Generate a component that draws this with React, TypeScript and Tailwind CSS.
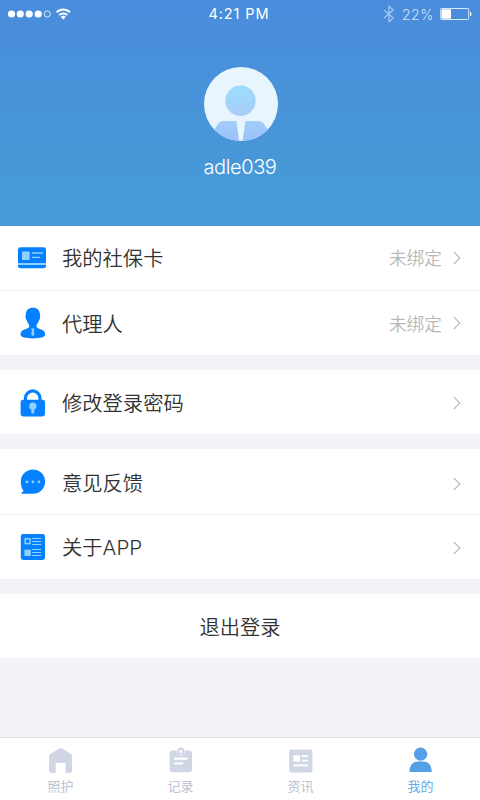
import React from 'react'

const CardIcon = () => (
  <svg className="mt-0.5 mr-px" width="28" height="22" viewBox="0 0 28 22">
    <rect width="28" height="21" y="0.3" rx="2.4" fill="#0580ff" />
    <rect y="16" width="28" height="2" fill="#8fd0ff" />
    <rect x="4" y="4.6" width="7.6" height="8.4" rx="0.6" fill="#8fd0ff" />
    <path d="M14 6h11M14 10.4h8" stroke="#8fd0ff" strokeWidth="1.3" />
  </svg>
)

const AgentIcon = () => (
  <svg width="26" height="32" viewBox="0 0 26 32">
    <path
      d="M12.900.7c4.300 0 7 2.600 7 6.800 0 1.100.4 1.300.3 2.700-.1 1.600-.7 2-1.200 3.300-.6 1.700-1.300 3.100-2.400 4.300v1.700c.2 1.500 2 2 4.500 2.900 2.900 1 4.100 2.500 4.100 5.400 0 2.300-5.400 3.600-12.400 3.600S.5 30.100.5 27.800c0-2.900 1.200-4.400 4.100-5.400 2.500-.9 4.300-1.400 4.500-2.900v-1.700c-1.100-1.200-1.800-2.600-2.400-4.300-.5-1.300-1.100-1.700-1.200-3.300-.1-1.400.3-1.600.3-2.700C5.800 3.300 8.600.7 12.900.7Z"
      fill="#0580ff"
    />
    <path d="M11.200 21.600h3.400l-.7 1.800.7 4.200-1.700 1.600-1.700-1.600.7-4.200Z" fill="#8fd0ff" />
  </svg>
)

const LockIcon = () => (
  <svg className="mt-px" width="26" height="28" viewBox="0 0 26 28">
    <path d="M5.400 12V9.200a7.300 7.300 0 0 1 14.600 0V12" fill="none" stroke="#0580ff" strokeWidth="3.2" />
    <rect x="0.6" y="10.800" width="24.400" height="16.600" rx="2.400" fill="#0580ff" />
    <circle cx="12.800" cy="17.200" r="3.600" fill="#8fd0ff" />
    <rect x="11.300" y="18" width="3" height="6.500" rx="1.200" fill="#8fd0ff" />
  </svg>
)

const ChatIcon = () => (
  <svg width="26" height="26" viewBox="0 0 26 26">
    <path
      d="M13 .6c6.800 0 12.100 5.300 12.100 12.100S19.800 24.800 13 24.800H2c-.7 0-.9-.6-.4-1l2-1.700C1.800 19.900.8 16.500.8 12.700.8 5.900 6.200.6 13 .6Z"
      fill="#0580ff"
    />
    <circle cx="6.900" cy="12.900" r="1.400" fill="#8fd0ff" />
    <circle cx="12.900" cy="12.900" r="1.400" fill="#8fd0ff" />
    <circle cx="18.900" cy="12.900" r="1.400" fill="#8fd0ff" />
  </svg>
)

const AboutIcon = () => (
  <svg width="26" height="28" viewBox="0 0 26 28">
    <rect x="0.8" y="1" width="24.200" height="26" rx="2.400" fill="#0580ff" />
    <rect x="5.200" y="5.800" width="4.800" height="4.800" fill="none" stroke="#8fd0ff" strokeWidth="1.500" />
    <rect x="4.400" y="16.600" width="6.400" height="6.400" fill="#8fd0ff" />
    <path d="M12.200 5.500h9M12.200 8.500h9M12.200 11.500h9M12.200 16.500h9M12.200 19.500h9M12.200 22.500h9" stroke="#8fd0ff" strokeWidth="1" />
  </svg>
)

const Arrow = () => (
  <svg width="8" height="14" viewBox="0 0 8 14" fill="none" stroke="#b4b4b4" strokeWidth="1.1">
    <path d="m.8.8 6 6.200-6 6.200" />
  </svg>
)

type RowProps = {
  icon: React.ReactNode
  label: React.ReactNode
  value?: string
  className?: string
  low?: boolean
}

const Row = ({ icon, label, value, className = 'h-16', low }: RowProps) => (
  <div className={`flex items-center bg-white pr-[19px] ${className}`}>
    <div className="ml-[18px] flex w-[29px] justify-center">{icon}</div>
    <span className="ml-[15px] flex-1 text-[20.3px] leading-7">{label}</span>
    {value && <span className="mr-[11px] text-[17.7px] leading-6 text-[#b8b8b8]">{value}</span>}
    <div className={low ? 'pt-1' : 'pt-px'}><Arrow /></div>
  </div>
)

const StatusBar = () => (
  <div className="grid h-7 grid-cols-3 items-center text-[14px] text-white">
    <div className="flex items-center pl-2">
      <svg width="64" height="14" viewBox="0 0 64 14" fill="#fff">
        <circle cx="3.500" cy="7" r="3.600" />
        <circle cx="12.300" cy="7" r="3.600" />
        <circle cx="21.200" cy="7" r="3.600" />
        <circle cx="30.200" cy="7" r="3.600" />
        <circle cx="39.300" cy="7" r="3.100" fill="none" stroke="#fff" strokeWidth="0.8" />
        <g fill="none" stroke="#fff" strokeWidth="2">
          <path d="M48.600 5.200a9.400 9.400 0 0 1 13.400 0" />
          <path d="M51.300 8.100a5.700 5.700 0 0 1 8 0" />
        </g>
        <path d="m52.800 10 2.500 2.500 2.500-2.500a3.500 3.500 0 0 0-5 0Z" />
      </svg>
    </div>
    <span className="pr-0.5 text-center font-[Inter,sans-serif] text-[14.5px] font-normal tracking-[0.9px]">4:21 PM</span>
    <div className="flex items-center justify-end pr-2 text-[#d3e5fa]">
      <svg width="12" height="18" viewBox="0 0 12 18" fill="none" stroke="#a9caf2" strokeWidth="1.2">
        <path d="m1.200 5 9 8L6 16.600V1.400L10.200 5l-9 8" />
      </svg>
      <span className="ml-[7px] font-[Inter,sans-serif] text-[14px] font-light tracking-[0.6px]">22%</span>
      <svg className="ml-1.5" width="32" height="14" viewBox="0 0 32 14">
        <rect x="0.700" y="1.500" width="28" height="11" rx="0.8" fill="none" stroke="#d9e9fb" />
        <rect x="1.500" y="2.300" width="9.500" height="9.400" fill="#fff" />
        <path d="M30 5h1q1 2 0 4h-1Z" fill="#fff" />
      </svg>
    </div>
  </div>
)

const Avatar = () => (
  <svg className="ml-px" width="74" height="74" viewBox="0 0 74 74">
    <defs>
      <linearGradient id="head" x2="0" y2="1">
        <stop stopColor="#9bddfb" />
        <stop offset="1" stopColor="#a9cdfb" />
      </linearGradient>
      <linearGradient id="suit" x2="0" y2="1">
        <stop stopColor="#a2cdfa" />
        <stop offset="1" stopColor="#9bc1fb" />
      </linearGradient>
      <clipPath id="round"><circle cx="37" cy="37" r="37" /></clipPath>
    </defs>
    <g clipPath="url(#round)">
      <rect width="74" height="74" fill="#e8f5fd" />
      <path d="M20 54h12.500l2.500 20H8V66l6-9q2-3 6-3ZM41.500 54H54q4 0 6 3l6 9v8H38.500Z" fill="url(#suit)" />
      <circle cx="36.500" cy="33.700" r="15.200" fill="url(#head)" />
    </g>
  </svg>
)

const tabs = [
  {
    label: '照护',
    icon: (
      <path d="M11.600 1.300q1-.5 2 0L22.600 6.700q1.500 1 1.500 2.600v14.200q0 2.500-2.500 2.500h-4V16H7.700v10H3.600q-2.500 0-2.500-2.500V9.300q0-1.600 1.500-2.600Z" />
    ),
  },
  {
    label: '记录',
    icon: (
      <>
        <path d="M4.500 3.500h16.700q2.800 0 2.800 2.800v16q0 2.900-2.800 2.900H4.500q-2.800 0-2.800-2.900v-16q0-2.800 2.800-2.800Z" />
        <path d="M8.900 3a4.100 4.100 0 1 0 8 0" fill="none" stroke="#fff" strokeWidth="0.7" />
        <circle cx="12.900" cy="4.100" r="3.500" />
        <circle cx="12.900" cy="4.600" r="1.700" fill="#fff" />
        <path d="M7 11.700h11.800M7 16.500h7.300" stroke="#fff" strokeWidth="2.200" strokeLinecap="round" />
      </>
    ),
  },
  {
    label: '资讯',
    icon: (
      <>
        <rect x="1.200" y="2.400" width="23.200" height="23.200" rx="2.500" />
        <path d="M5.300 8.200h6.600v6.400H5.300Z" fill="#fff" />
        <path d="M13.700 9.200h6.500M13.700 13.600h6.500M5.300 18.400h14.900" stroke="#fff" strokeWidth="1.800" />
      </>
    ),
  },
  {
    label: '我的',
    active: true,
    icon: (
      <>
        <circle cx="12.600" cy="7.200" r="6.600" />
        <path d="M1.500 25q-.2-10.400 9-10.400h4.300q9 0 9 10.400Z" />
      </>
    ),
  },
]

const App = () => {
  return (
    <div className="flex h-[800px] w-[480px] flex-col bg-[#f3f3f7] font-['Noto_Sans_CJK_SC',sans-serif] font-[350] text-[#333333]">
      <header className="h-[226px] bg-linear-to-b from-[#4a8cdc] to-[#469cd6]">
        <StatusBar />
        <div className="flex flex-col items-center pt-[39px]">
          <Avatar />
          <p className="mt-3 font-[Inter,sans-serif] text-[20px] font-light leading-7 tracking-[-0.4px] text-white">adle039</p>
        </div>
      </header>

      <main className="flex flex-1 flex-col gap-[15px]">
        <section>
          <Row icon={<CardIcon />} label="我的社保卡" value="未绑定" className="h-[65px] border-b border-[#f0f0f2] pb-0.5" />
          <Row icon={<AgentIcon />} label="代理人" value="未绑定" className="h-16 pb-px" />
        </section>
        <Row icon={<LockIcon />} label="修改登录密码" />
        <section>
          <Row icon={<ChatIcon />} label="意见反馈" className="h-[66px] border-b border-[#f0f0f2]" low />
          <Row
            icon={<AboutIcon />}
            label={<>关于<span className="font-[Inter,sans-serif] text-[20.5px] font-light">APP</span></>}
          />
        </section>
        <button className="h-16 bg-white text-center text-[20.3px]">退出登录</button>
      </main>

      <nav className="grid h-[63px] grid-cols-4 border-t border-[#e3e3e7] bg-white">
        {tabs.map((tab) => (
          <div key={tab.label} className={`flex flex-col items-center pl-px pt-[9px] ${tab.active ? 'text-[#56a0e8]' : 'text-[#b3bccd]'}`}>
            <svg width="26" height="27" viewBox="0 0 26 27" fill={tab.active ? '#56a0e8' : '#d0d6e4'}>
              {tab.icon}
            </svg>
            <span className="mt-0.5 text-[13px] leading-5">{tab.label}</span>
          </div>
        ))}
      </nav>
    </div>
  )
}

export default App
